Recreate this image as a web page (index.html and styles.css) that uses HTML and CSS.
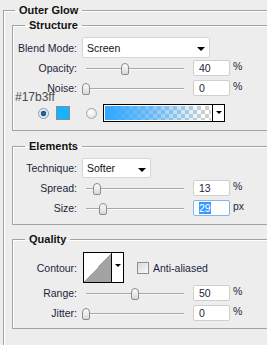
FILE: index.html
```html
<!DOCTYPE html>
<html lang="en">
<head>
  <meta charset="UTF-8">
  <meta name="viewport" content="width=device-width, initial-scale=1.0">
  <title>Outer Glow</title>
  <link rel="stylesheet" href="styles.css">
</head>
<body>
  <fieldset class="group outer">
    <legend>Outer Glow</legend>

    <fieldset class="group structure">
      <legend>Structure</legend>
      <div class="row row-select">
        <label class="label">Blend Mode:</label>
        <div class="select select-blend">Screen<span class="arrow"></span></div>
      </div>
      <div class="row">
        <label class="label">Opacity:</label>
        <div class="track"><span class="thumb" style="left: 40%"></span></div>
        <div class="field">40</div>
        <span class="unit">%</span>
      </div>
      <div class="row">
        <label class="label">Noise:</label>
        <div class="track"><span class="thumb" style="left: 0%"></span></div>
        <div class="field">0</div>
        <span class="unit">%</span>
      </div>
      <div class="color-row">
        <span class="radio checked"></span>
        <span class="swatch"></span>
        <span class="radio"></span>
        <div class="gradient">
          <div class="gradient-fill"></div>
          <span class="gradient-arrow"><span class="arrow"></span></span>
        </div>
      </div>
    </fieldset>

    <fieldset class="group elements">
      <legend>Elements</legend>
      <div class="row row-select">
        <label class="label">Technique:</label>
        <div class="select select-technique">Softer<span class="arrow"></span></div>
      </div>
      <div class="row">
        <label class="label">Spread:</label>
        <div class="track"><span class="thumb" style="left: 11%"></span></div>
        <div class="field">13</div>
        <span class="unit">%</span>
      </div>
      <div class="row">
        <label class="label">Size:</label>
        <div class="track"><span class="thumb" style="left: 17%"></span></div>
        <div class="field focused"><span class="selected">29</span></div>
        <span class="unit">px</span>
      </div>
    </fieldset>

    <fieldset class="group quality">
      <legend>Quality</legend>
      <div class="row row-contour">
        <label class="label">Contour:</label>
        <div class="contour">
          <div class="contour-curve"></div>
          <span class="contour-arrow"><span class="arrow"></span></span>
        </div>
        <span class="checkbox"></span>
        <span class="check-label">Anti-aliased</span>
      </div>
      <div class="row">
        <label class="label">Range:</label>
        <div class="track"><span class="thumb" style="left: 50%"></span></div>
        <div class="field">50</div>
        <span class="unit">%</span>
      </div>
      <div class="row">
        <label class="label">Jitter:</label>
        <div class="track"><span class="thumb" style="left: 0%"></span></div>
        <div class="field">0</div>
        <span class="unit">%</span>
      </div>
    </fieldset>
  </fieldset>

  <div class="hex-tip">#17b3ff</div>
</body>
</html>
```

FILE: styles.css
```css
html,
body {
  overflow: hidden;
}

body {
  margin: 0;
  height: 345px;
  position: relative;
  background-color: #ededed;
  font-family: "Liberation Sans", Arial, sans-serif;
  font-size: 10.5px;
  color: #1d1f3a;
}

/* group boxes - the panel runs on past the right and bottom edge,
   so those sides are left open */
.group {
  margin: 0;
  padding: 0;
  border: 1px solid #a3a3a3;
  border-right: none;
  box-shadow: inset 1px 1px 0 #fff;
}

.group legend {
  margin-left: 12px;
  padding: 0 4px;
  font-size: 11px;
  font-weight: bold;
  line-height: 13px;
  color: #111;
}

.outer {
  box-sizing: border-box;
  height: 341px;
  margin: 4px 0 0 3px;
  padding: 0 0 0 8px;
  border-bottom: none;
}

.outer > legend {
  margin-left: 3px;
}

.structure {
  margin-top: 2px;
  padding: 5px 0 8px;
}

.elements {
  margin-top: 9px;
  padding: 5px 0 6px;
}

.quality {
  margin-top: 8px;
  padding: 6px 0 5px;
}

/* rows */
.row {
  display: flex;
  align-items: center;
  height: 20px;
}

.row-select {
  height: 21px;
}

.elements .row-select {
  height: 20px;
}

.row-contour {
  height: 31px;
}

.label {
  width: 64px;
  margin-right: 5px;
  text-align: right;
}

/* select boxes */
.select {
  position: relative;
  box-sizing: border-box;
  height: 100%;
  padding: 0 0 0 4px;
  display: flex;
  align-items: center;
  background-color: #fff;
  border: 1px solid #d6d6d6;
  border-radius: 2px;
  color: #111;
}

.select-blend {
  width: 128px;
}

.select-technique {
  width: 69px;
}

.select .arrow {
  position: absolute;
  right: 4px;
  top: 9px;
}

.arrow {
  display: block;
  width: 0;
  height: 0;
  border-left: 4px solid transparent;
  border-right: 4px solid transparent;
  border-top: 4px solid #000;
}

/* sliders */
.track {
  position: relative;
  width: 98px;
  height: 0;
  margin: 1px 9px 0 4px;
  border-top: 1px solid #a8a8a8;
  border-bottom: 1px solid #fafafa;
}

.thumb {
  position: absolute;
  top: -6px;
  width: 8px;
  height: 12px;
  box-sizing: border-box;
  transform: translateX(-50%);
  background: linear-gradient(#fdfdfd, #d8d8d8);
  border: 1px solid #8c8c8c;
  border-radius: 4px 4px 2px 2px;
}

.field {
  box-sizing: border-box;
  width: 37px;
  height: 16px;
  padding: 0 0 0 5px;
  line-height: 14px;
  background-color: #fff;
  border: 1px solid #cfcfcf;
  border-radius: 2px;
  color: #1d1f3a;
}

.field.focused {
  border-color: #86b6e2;
}

.selected {
  background-color: #3399ff;
  color: #fff;
}

.unit {
  margin-left: 3px;
  align-self: flex-start;
  margin-top: 2px;
}

/* colour row */
.color-row {
  display: flex;
  align-items: center;
  height: 18px;
  margin-top: 6px;
  padding-left: 25px;
}

.radio {
  box-sizing: border-box;
  width: 11px;
  height: 11px;
  border: 1px solid #a5a5a5;
  border-radius: 50%;
  background: radial-gradient(circle at 40% 35%, #fff, #d9d9d9);
}

.radio.checked {
  background: radial-gradient(circle, #2a6ea8 0, #1b4f86 2.5px, #d6e4ef 3px, #f4f4f4 5px);
  border-color: #8e9aa6;
}

.swatch {
  width: 14px;
  height: 14px;
  box-sizing: border-box;
  margin: 0 16px 0 7px;
  background-color: #17b3ff;
  border: 1px solid #8a8a8a;
}

.gradient {
  display: flex;
  box-sizing: border-box;
  width: 122px;
  height: 18px;
  margin-left: 6px;
  border: 1px solid #000;
  background-color: #fff;
}

.gradient-fill {
  flex: 1;
  margin: 1px;
  background:
    linear-gradient(to right, #2ea6ff, rgba(46, 166, 255, 0.6) 45%, rgba(46, 166, 255, 0) 95%),
    conic-gradient(#cfcfcf 25%, #fff 0 50%, #cfcfcf 0 75%, #fff 0) 0 0 / 8px 8px;
}

.gradient-arrow,
.contour-arrow {
  display: flex;
  justify-content: center;
  width: 11px;
  border-left: 1px solid #000;
  background-color: #fff;
}

.gradient-arrow .arrow {
  margin-top: 6px;
  border-left-width: 3px;
  border-right-width: 3px;
  border-top-width: 3px;
}

/* contour */
.contour {
  display: flex;
  box-sizing: border-box;
  width: 41px;
  height: 31px;
  margin-left: 1px;
  border: 1px solid #000;
}

.contour-curve {
  flex: 1;
  background: linear-gradient(to top left, #a3a3a3 50%, #fff 50%);
}

.contour-arrow .arrow {
  margin-top: 11px;
  border-left-width: 3px;
  border-right-width: 3px;
  border-top-width: 3px;
}

.checkbox {
  box-sizing: border-box;
  width: 12px;
  height: 12px;
  margin: 0 4px 0 13px;
  border: 1px solid #8f8f8f;
  background: linear-gradient(135deg, #d9d9d9, #fbfbfb);
}

.check-label {
  color: #1d1f3a;
}

/* colour tooltip */
.hex-tip {
  position: absolute;
  left: 15px;
  top: 90px;
  font-size: 12px;
  line-height: 14px;
  color: #4a4a4a;
}
```
